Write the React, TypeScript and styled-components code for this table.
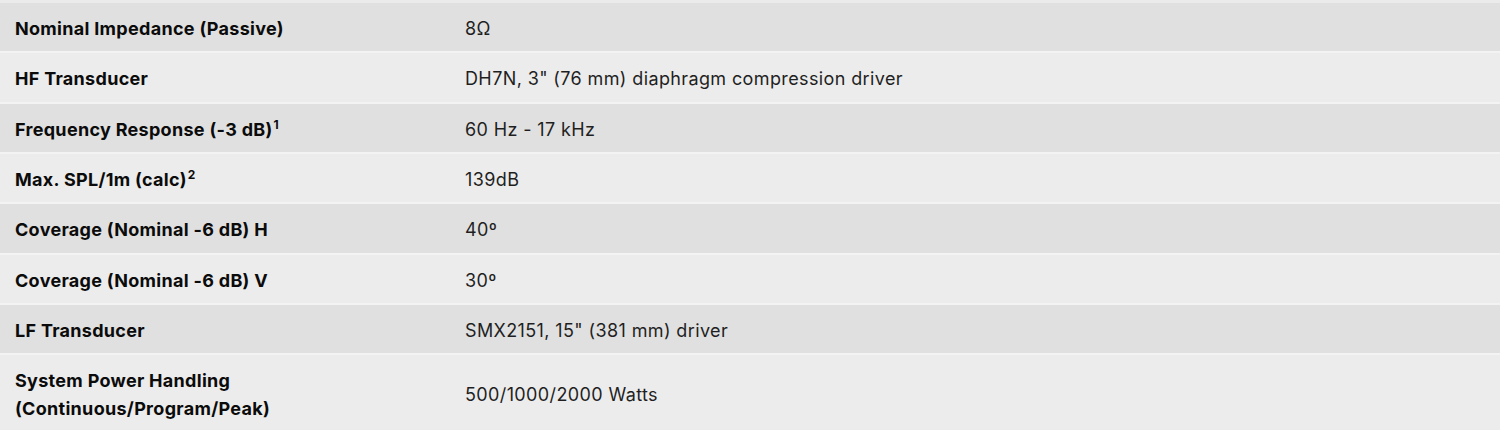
import React from 'react'
import styled, { createGlobalStyle } from 'styled-components'

const GlobalStyle = createGlobalStyle`
  html, body {
    margin: 0;
    padding: 0;
    background: #ebebeb;
  }
`

const SpecTable = styled.table`
  width: 100%;
  border-collapse: collapse;
  margin-top: 3px;
  font-family: Inter, 'Liberation Sans', sans-serif;
  font-size: 18px;
  line-height: 28px;
`

const SpecRow = styled.tr<{ $shaded: boolean }>`
  background: ${({ $shaded }) => ($shaded ? '#e0e0e0' : '#ececec')};
  border-bottom: 2px solid #f3f3f3;
`

const LabelCell = styled.th`
  width: 30%;
  padding: 12px 15px 8.34px;
  text-align: left;
  vertical-align: middle;
  font-weight: 700;
  color: #0b0b0b;
  letter-spacing: 0.3px;
`

const ValueCell = styled.td`
  padding: 12px 15px 8.34px;
  vertical-align: middle;
  font-weight: 400;
  color: #1f1f1f;
  letter-spacing: 0.38px;
`

const Note = styled.sup`
  font-size: 12px;
  line-height: 0;
  margin-left: 1px;
`

interface Spec {
  label: React.ReactNode
  value: string
}

const specs: Spec[] = [
  { label: 'Nominal Impedance (Passive)', value: '8Ω' },
  { label: 'HF Transducer', value: 'DH7N, 3" (76 mm) diaphragm compression driver' },
  {
    label: (
      <>
        Frequency Response (-3 dB)<Note>1</Note>
      </>
    ),
    value: '60 Hz - 17 kHz',
  },
  {
    label: (
      <>
        Max. SPL/1m (calc)<Note>2</Note>
      </>
    ),
    value: '139dB',
  },
  { label: 'Coverage (Nominal -6 dB) H', value: '40º' },
  { label: 'Coverage (Nominal -6 dB) V', value: '30º' },
  { label: 'LF Transducer', value: 'SMX2151, 15" (381 mm) driver' },
  {
    label: (
      <>
        System Power Handling
        <br />
        (Continuous/Program/Peak)
      </>
    ),
    value: '500/1000/2000 Watts',
  },
]

export default function App() {
  return (
    <>
      <GlobalStyle />
      <SpecTable>
        <tbody>
          {specs.map((spec, i) => (
            <SpecRow key={`spec-${i}`} $shaded={i % 2 === 0}>
              <LabelCell>{spec.label}</LabelCell>
              <ValueCell>{spec.value}</ValueCell>
            </SpecRow>
          ))}
        </tbody>
      </SpecTable>
    </>
  )
}
